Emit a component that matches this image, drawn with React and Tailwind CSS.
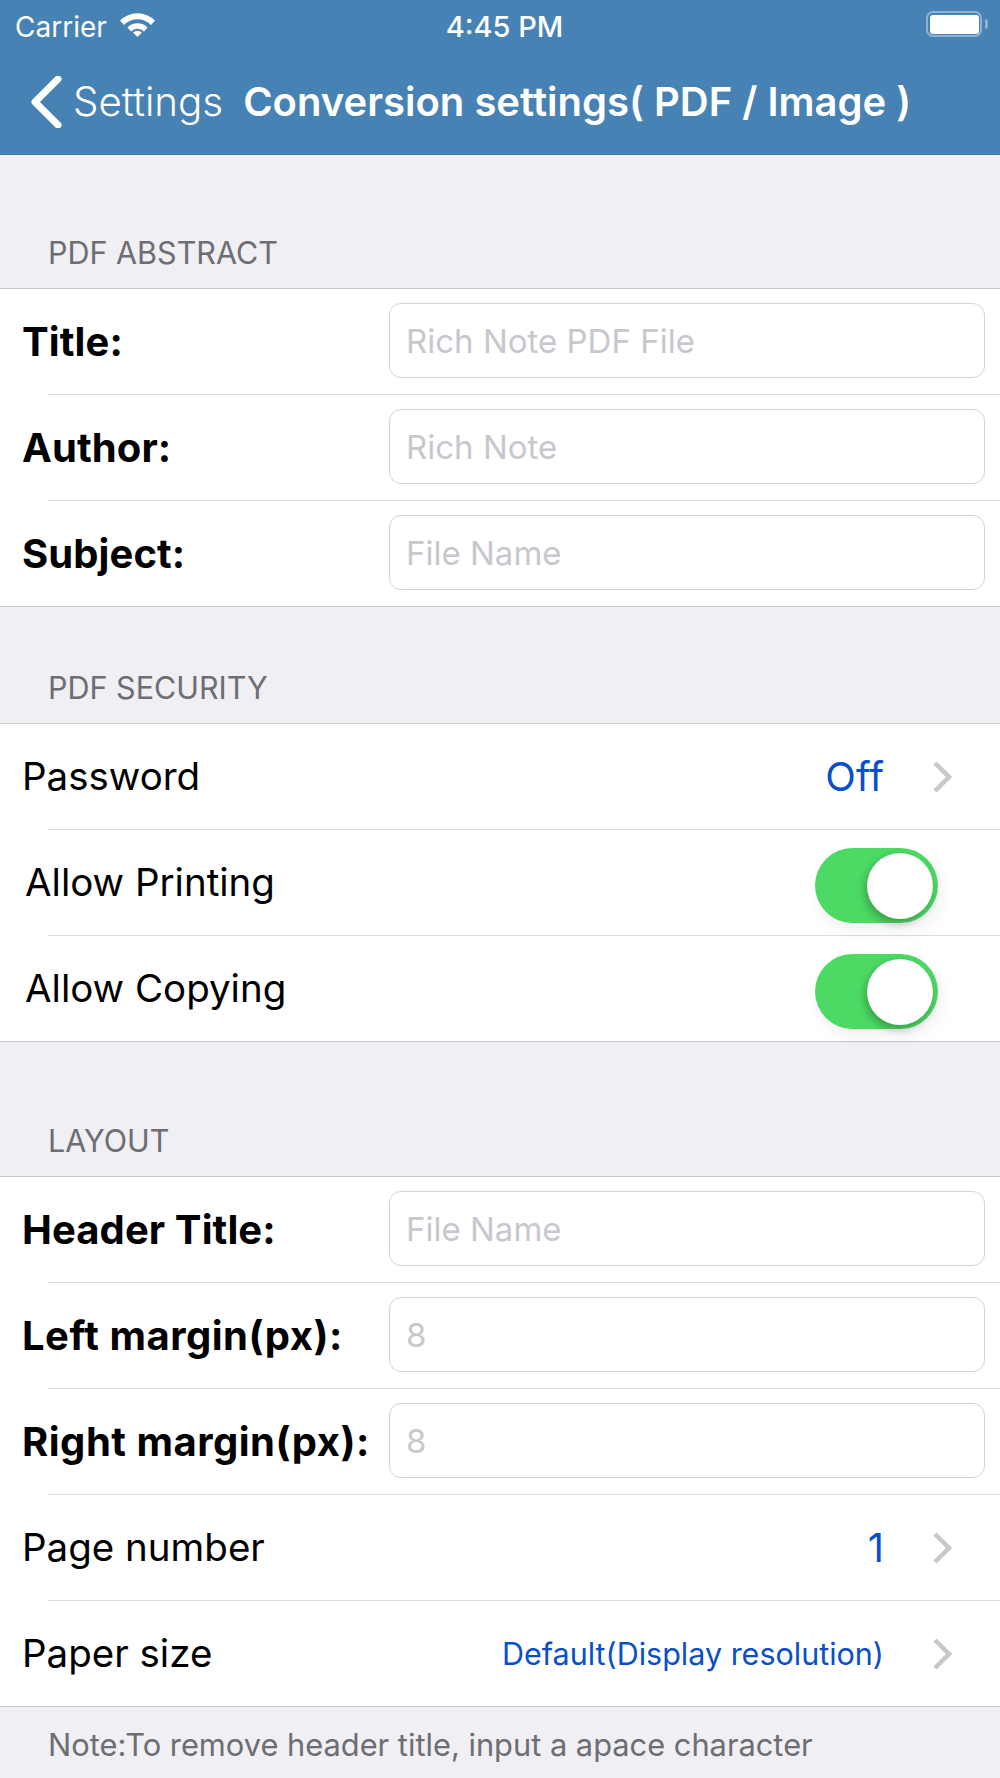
import { useState } from "react";

const Chevron = () => (
  <svg width="20" height="32" viewBox="0 0 20 32" className="ml-[48px] mr-[48px] shrink-0">
    <path d="M3 2 L17 16 L3 30" fill="none" stroke="#c7c7cc" strokeWidth="4.5" />
  </svg>
);

const Separator = () => <div className="ml-[48px] h-px bg-[#dcdce0]" />;

function InputRow({ label, placeholder, wide }) {
  return (
    <div className="flex h-[105px] items-center pl-[22px] pr-[15px]">
      <span className={`flex-1 text-[40px] font-bold text-black ${wide ? "tracking-[0.5px]" : "tracking-[0.1px]"}`}>{label}</span>
      <input
        readOnly
        placeholder={placeholder}
        className="mb-[2px] h-[75px] w-[596px] rounded-[12px] border border-[#d4d4d6] px-[16px] text-[33px] outline-none placeholder:text-[#c7c7cd]"
      />
    </div>
  );
}

function ValueRow({ label, value, small }) {
  return (
    <div className="flex h-[105px] items-center pl-[22px]">
      <span className="flex-1 text-[38.5px] text-black">{label}</span>
      <span className={small ? "text-[30.5px] text-[#0a4fc9]" : "text-[40px] text-[#0a4fc9]"}>{value}</span>
      <Chevron />
    </div>
  );
}

function SwitchRow({ label }) {
  const [on, setOn] = useState(true);
  return (
    <div className="flex h-[105px] items-center pl-[25px] pr-[62px]">
      <span className="flex-1 text-[38.5px] text-black">{label}</span>
      <button
        onClick={() => setOn(!on)}
        className="mt-[6px] flex h-[75px] w-[123px] items-center justify-end rounded-full bg-[#4cd964] pr-[5px] shadow-[4px_8px_16px_rgba(0,0,0,0.06)]"
      >
        <span className="h-[66px] w-[66px] rounded-full bg-white shadow-[-2px_4px_8px_rgba(0,0,0,0.28)]" />
      </button>
    </div>
  );
}

const SectionHeader = ({ title, height }) => (
  <div className={`flex items-end px-[48px] pb-[12px] text-[30.5px] text-[#6d6d72] ${height}`}>{title}</div>
);

const Group = ({ children }) => (
  <div className="border-y border-[#c8c7cc] bg-white">{children}</div>
);

export default function App() {
  return (
    <div className="h-[1778px] w-[1000px] overflow-hidden bg-[#efeff4] font-['Inter','Liberation_Sans',sans-serif]">
      <header className="h-[155px] border-b border-[#3f77a6] bg-[#4682b4] text-white">
        <div className="flex h-[50px] items-center justify-between pl-[15px] pr-[12px] pt-[4px]">
          <div className="flex w-[306px] items-center gap-[13px] text-[28px]">
            <span>Carrier</span>
            <svg width="35" height="25" viewBox="0 0 35 25" className="-mt-[5px]">
              <path d="M0 8.5 A25 25 0 0 1 35 8.5 L31 13 A19 19 0 0 0 4 13 Z" fill="#fff" />
              <path d="M7.5 15.5 A14 14 0 0 1 27.5 15.5 L24 19.5 A9 9 0 0 0 11 19.5 Z" fill="#fff" />
              <path d="M13 20.5 A7 7 0 0 1 22 20.5 L17.5 25 Z" fill="#fff" />
            </svg>
          </div>
          <span className="text-[29px] font-medium">4:45 PM</span>
          <div className="-mt-[6px] flex w-[300px] items-center justify-end">
            <div className="flex h-[26px] w-[56px] items-center rounded-[7px] border-[2.5px] border-[#8fb2d2] p-[1.5px]">
              <div className="h-full w-full rounded-[3px] bg-white" />
            </div>
            <div className="ml-[3px] h-[10px] w-[3px] rounded-r-full bg-[#8fb2d2]" />
          </div>
        </div>
        <div className="flex h-[104px] items-center pl-[31px]">
          <svg width="32" height="52" viewBox="0 0 32 52" className="shrink-0">
            <path d="M27 3 L4 26 L27 49" fill="none" stroke="#fff" strokeWidth="7" strokeLinecap="round" strokeLinejoin="round" />
          </svg>
          <span className="ml-[10px] text-[40.3px] font-light">Settings</span>
          <span className="ml-[20px] text-[40px] font-semibold whitespace-nowrap">Conversion settings( PDF / Image )</span>
        </div>
      </header>

      <SectionHeader title="PDF ABSTRACT" height="h-[133px]" />
      <Group>
        <InputRow label="Title:" placeholder="Rich Note PDF File" />
        <Separator />
        <InputRow label="Author:" placeholder="Rich Note" />
        <Separator />
        <InputRow label="Subject:" placeholder="File Name" />
      </Group>

      <SectionHeader title="PDF SECURITY" height="h-[116px]" />
      <Group>
        <ValueRow label="Password" value="Off" />
        <Separator />
        <SwitchRow label="Allow Printing" />
        <Separator />
        <SwitchRow label="Allow Copying" />
      </Group>

      <SectionHeader title="LAYOUT" height="h-[134px]" />
      <Group>
        <InputRow label="Header Title:" placeholder="File Name" />
        <Separator />
        <InputRow label="Left margin(px):" placeholder="8" wide />
        <Separator />
        <InputRow label="Right margin(px):" placeholder="8" wide />
        <Separator />
        <ValueRow label="Page number" value="1" />
        <Separator />
        <ValueRow label="Paper size" value="Default(Display resolution)" small />
      </Group>
      <p className="px-[48px] pt-[15px] text-[30.8px] text-[#6d6d72]">Note:To remove header title, input a apace character</p>
    </div>
  );
}
